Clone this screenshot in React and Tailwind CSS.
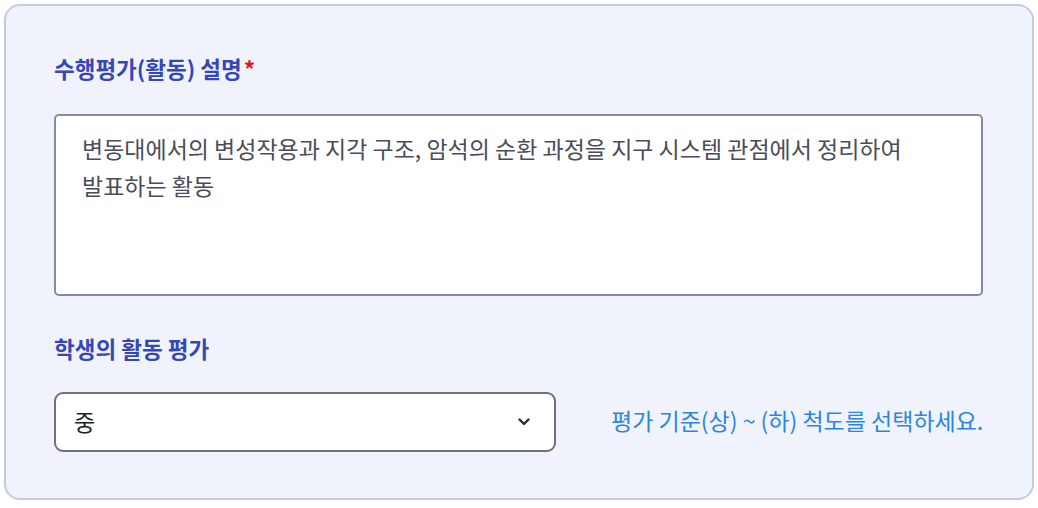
import React, { useState } from 'react';

export default function App() {
  const [grade, setGrade] = useState('중');

  return (
    <div
      className="min-h-[508px] w-[1038px] bg-white p-[4px]"
      style={{ fontFamily: '"Noto Sans CJK KR", "Noto Sans", sans-serif' }}
    >
      <section className="w-[1030px] rounded-[16px] border-2 border-[#c9c9dc] bg-[#f1f3fc] px-[48px] pt-[48px] pb-[46px]">
        <label className="block text-[22.5px] font-bold leading-[28px] text-[#3547b5]">
          수행평가(활동) 설명<span className="ml-[2px] text-[#e3151a]">*</span>
        </label>

        <div className="mt-[32px] h-[182px] w-[929px] rounded-[5px] border-2 border-[#858aa3] bg-white px-[26px] pt-[14px] text-[23px] leading-[37px] text-[#4a4d59]">
          변동대에서의 변성작용과 지각 구조, 암석의 순환 과정을 지구 시스템 관점에서 정리하여
          <br />
          발표하는 활동
        </div>

        <label className="mt-[38px] block text-[22.5px] font-bold leading-[28px] text-[#3547b5]">
          학생의 활동 평가
        </label>

        <div className="mt-[30px] flex items-center gap-[55px]">
          <div className="relative h-[60px] w-[502px] rounded-[9px] border-2 border-[#6f7078] bg-white">
            <select
              value={grade}
              onChange={(e) => setGrade(e.target.value)}
              className="h-full w-full appearance-none bg-transparent pb-[2px] pl-[18px] text-[23px] text-[#222] outline-none"
            >
              <option>상</option>
              <option>중</option>
              <option>하</option>
            </select>
            <svg
              className="pointer-events-none absolute right-[24px] top-1/2 -translate-y-1/2"
              width="12"
              height="8"
              viewBox="0 0 12 8"
              fill="none"
            >
              <path d="M1.5 1.5L6 6L10.5 1.5" stroke="#2b2e3a" strokeWidth="2.4" strokeLinecap="round" strokeLinejoin="round" />
            </svg>
          </div>
          <p className="-mt-[4px] text-[23px] leading-[28px] text-[#2a86e0]">평가 기준(상) ~ (하) 척도를 선택하세요.</p>
        </div>
      </section>
    </div>
  );
}
